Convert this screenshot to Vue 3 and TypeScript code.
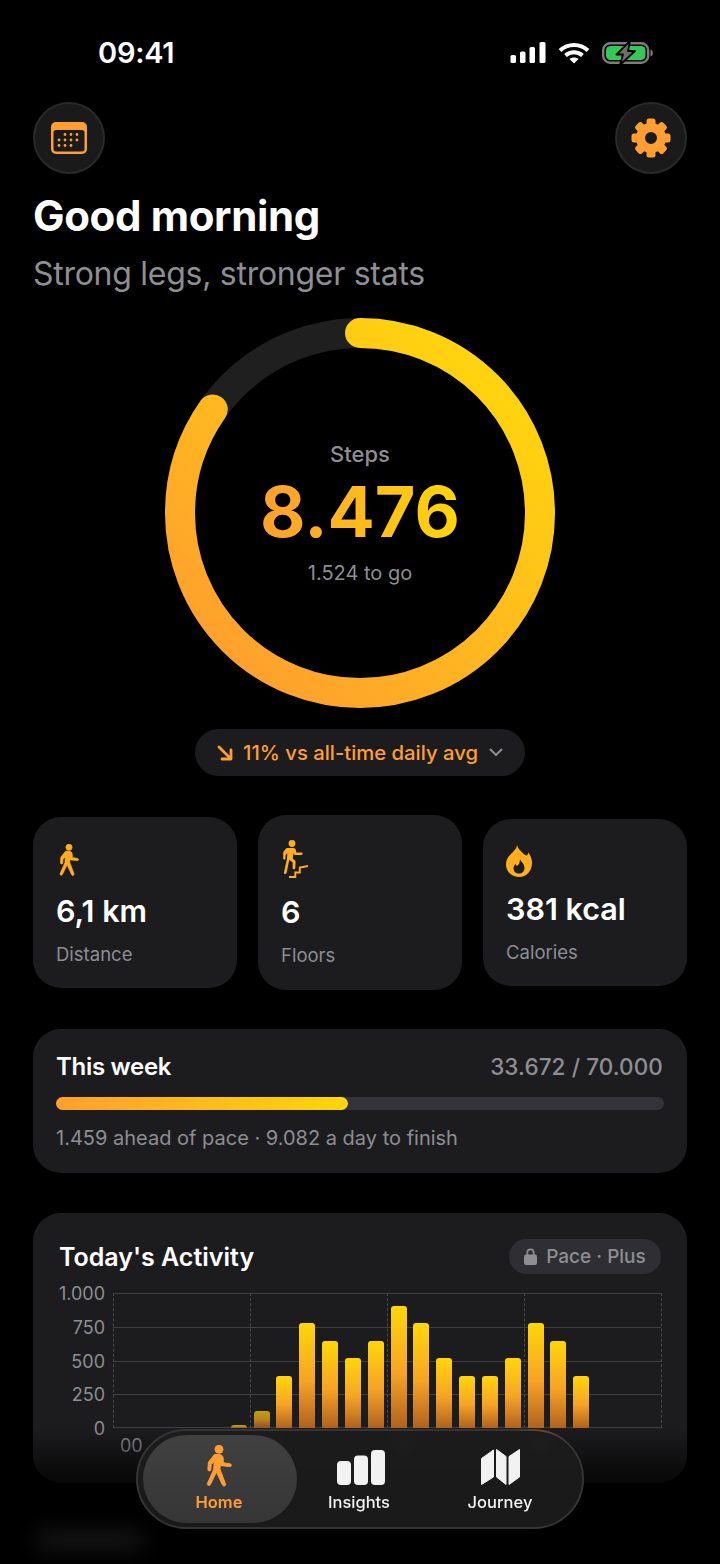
<script setup lang="ts">
// Home tab of the step tracker: ring, stat cards, week bar and hourly chart.
const WALK_TORSO = "M9.5 9.5h4.6c2.4 0 3.9 1.5 4 3.600l.3 4.600 6.800 1.200c1.900.4 1.500 2.900-.4 2.700l-8-.9c-.9-.1-1.300-.6-1.400-1.300l-.5 4.600 5.600 14.900c.7 2-2.100 3-3 1.100l-6.100-13-6 12.600c-1 1.900-3.600.8-3-1.100l6.300-14 .5-7.700-3 2.700-.3 5.100c-.1 2-3 1.900-3-.2l.4-6.400c.1-.8.4-1.400 1-2z";

const TEETH = [0, 45, 90, 135, 180, 225, 270, 315];
const HOUR_BARS: [number, number][] = [
  [5, 25], [6, 125], [7, 385], [8, 775], [9, 645], [10, 515], [11, 645], [12, 905],
  [13, 775], [14, 515], [15, 385], [16, 385], [17, 515], [18, 775], [19, 645], [20, 385],
];
const TICKS = ["1.000", "750", "500", "250", "0"];
const HOURS = ["00", "06", "12", "18"];

const CHART_H = 135;
const barStyle = (hour: number, v: number) => ({
  left: `${(hour / 24) * 100 + 0.65}%`,
  height: `${(v / 1000) * CHART_H}px`,
  opacity: v < 200 ? 0.72 : 1,
});
</script>

<template>
  <div class="phone">
    <header class="status">
      <span class="time">09:41</span>
      <div class="status-icons">
        <svg width="36" height="22" viewBox="0 0 36 22" fill="#fff">
          <rect x="0.5" y="13" width="5.500" height="8" rx="1.600" />
          <rect x="10" y="9.500" width="5.500" height="11.500" rx="1.600" />
          <rect x="19.500" y="5" width="5.500" height="16" rx="1.600" />
          <rect x="29.500" y="0" width="6" height="21" rx="1.600" />
        </svg>
        <svg width="32" height="22" viewBox="0 0 32 22" fill="none" stroke="#fff" stroke-width="4">
          <path d="M2 8.500C9.800 1.200 22.200 1.200 30 8.500" />
          <path d="M7.500 13.500c4.800-4.200 12.200-4.200 17 0" />
          <path d="M16 21.500l-4.500-4.600c2.600-2 6.400-2 9 0z" fill="#fff" stroke="none" />
        </svg>
        <svg width="51" height="24" viewBox="0 0 51 24">
          <rect x="1.200" y="2.200" width="45" height="19.600" rx="7" fill="none" stroke="#7d7d7f" stroke-width="2.400" />
          <rect x="4" y="5" width="39.500" height="14" rx="4.500" fill="#34c759" />
          <path d="M48.500 8.500c1.500.4 2.400 1.700 2.400 3.500s-.9 3.100-2.400 3.500z" fill="#7d7d7f" />
          <path d="M28 0L14.500 13.500h6.500L18 24 33 10h-7z" fill="#6f6f71" stroke="#000" stroke-width="1.800" stroke-linejoin="round" />
        </svg>
      </div>
    </header>

    <div class="top-actions">
      <button class="round-btn">
        <svg width="36" height="32" viewBox="0 0 36 32">
          <rect width="36" height="32" rx="5" fill="#ff9f33" />
          <rect x="2.500" y="8" width="31" height="21.500" rx="2.500" fill="#1b1b1d" />
          <g fill="#ff9f33">
            <circle v-for="c in [[14, 12.500], [20, 12.500], [26, 12.500], [8, 18], [14, 18], [20, 18], [26, 18], [8, 23.500], [14, 23.500], [20, 23.500]]" :key="c.join()" :cx="c[0]" :cy="c[1]" r="1.400" />
          </g>
        </svg>
      </button>
      <button class="round-btn">
        <svg width="40" height="40" viewBox="-20 -20 40 40" fill="#ff9f33">
          <rect v-for="t in TEETH" :key="t" x="-4.500" y="-19.500" width="9" height="9" rx="2.500" :transform="`rotate(${t})`" />
          <circle r="10.500" fill="none" stroke="#ff9f33" stroke-width="9" />
        </svg>
      </button>
    </div>

    <h1 class="greeting">Good morning</h1>
    <p class="tagline">Strong legs, stronger stats</p>

    <section class="ring-wrap">
      <svg class="ring" width="390" height="390" viewBox="0 0 390 390" fill="none">
        <defs>
          <!-- coords are in the rotated space of the progress circle -->
          <linearGradient id="ringGrad" gradientUnits="userSpaceOnUse" x1="40" y1="60" x2="330" y2="320">
            <stop offset="0" stop-color="#ff9f2e" />
            <stop offset="1" stop-color="#ffd30f" />
          </linearGradient>
        </defs>
        <circle cx="195" cy="195" r="180" stroke="#1f1f1f" stroke-width="30" />
        <circle cx="195" cy="195" r="180" stroke="url(#ringGrad)" stroke-width="30" stroke-linecap="round" pathLength="100" stroke-dasharray="84.76 100" transform="rotate(-90 195 195)" />
      </svg>
      <div class="ring-text">
        <span class="ring-label">Steps</span>
        <span class="ring-value">8.476</span>
        <span class="ring-sub">1.524 to go</span>
      </div>
    </section>

    <div class="trend-row">
      <div class="trend">
        <svg width="16" height="16" viewBox="0 0 16 16" fill="none" stroke="#ff9f33" stroke-width="2.800" stroke-linecap="round" stroke-linejoin="round">
          <path d="M2 2l12 12M14 5v9H5" />
        </svg>
        <span>11% vs all-time daily avg</span>
        <svg class="chev" width="14" height="9" viewBox="0 0 14 9" fill="none" stroke="#8e8e93" stroke-width="2" stroke-linecap="round" stroke-linejoin="round">
          <path d="M1.500 1.500L7 7l5.500-5.500" />
        </svg>
      </div>
    </div>

    <div class="stats">
      <div class="stat">
        <svg class="stat-icon walk" width="22" height="33" viewBox="0 0 28 43" fill="#ffae1f" stroke="#ffae1f" stroke-width="1" stroke-linejoin="round">
          <circle cx="14" cy="4.300" r="4" />
          <path :d="WALK_TORSO" />
        </svg>
        <div class="stat-value">6,1 km</div>
        <div class="stat-label">Distance</div>
      </div>
      <div class="stat tall">
        <svg class="stat-icon stairs" width="29" height="38" viewBox="0 0 29 38" fill="#ffae1f">
          <circle cx="11" cy="3.500" r="3.400" />
          <path d="M6 8h6c1.800 0 2.900 1 3 2.500l.2 2h5.300c1.600 0 1.600 2.400 0 2.400H14c-.8 0-1.200-.5-1.300-1l-.3-1.200-.6 6 2.800 2.300-.3 7c-.1 1.800-2.700 1.700-2.700-.1l.1-5.400-3.400-2.700L5.600 33c-.6 1.700-3.100 1-2.600-.8l3-13.600.3-5.300-1.700 1.600-.1 3.600c0 1.500-2.300 1.500-2.300 0v-5.600c0-.5.200-.9.500-1.300L5 8.500z" />
          <path d="M8 37h6.300v-4.500h4.500v-5l8.200-1.500" fill="none" stroke="#ffae1f" stroke-width="1.900" />
        </svg>
        <div class="stat-value">6</div>
        <div class="stat-label">Floors</div>
      </div>
      <div class="stat">
        <svg class="stat-icon" width="26" height="32" viewBox="0 0 26 32">
          <path d="M11 0c1 3.500 3.200 5.500 6 8.300 2 2 3.500 2.800 4.500 1.500.5-.7.600-1.600.5-2.500 2.400 2.700 4 6.500 4 10.700C26 26 20.500 32 13 32S0 26.500 0 19.500C0 13 3.700 10.500 7 7c2-2.200 3.800-4.300 4-7z" fill="#ffae1f" />
          <path d="M14 14c.5 2.500 4.500 4.500 4.500 9 0 3.500-2.500 5.500-5.500 5.500S7.500 26.500 7.500 23.500c0-2 1-3.500 2-4.500.3 1.300 1 2 1.700 1.800 1.300-.5 2.800-3 2.800-6.800z" fill="#1c1c1e" />
        </svg>
        <div class="stat-value">381 kcal</div>
        <div class="stat-label">Calories</div>
      </div>
    </div>

    <section class="card week">
      <div class="week-head">
        <span class="card-title">This week</span>
        <span class="week-total">33.672 / 70.000</span>
      </div>
      <div class="track"><div class="fill" :style="{ width: '48.1%' }"></div></div>
      <div class="week-note">1.459 ahead of pace · 9.082 a day to finish</div>
    </section>

    <section class="card activity">
      <div class="activity-head">
        <span class="card-title">Today's Activity</span>
        <span class="plus-pill">
          <svg width="13" height="17" viewBox="0 0 13 17" fill="#8e8e93">
            <path d="M2.500 7V4.500a4 4 0 0 1 8 0V7h-1.700V4.500a2.300 2.300 0 0 0-4.600 0V7z" />
            <rect y="6.500" width="13" height="10.500" rx="2" />
          </svg>
          Pace · Plus
        </span>
      </div>
      <div class="chart">
        <div class="y-axis">
          <span v-for="t in TICKS" :key="t">{{ t }}</span>
        </div>
        <div class="plot-col">
          <div class="plot">
            <i v-for="n in 4" :key="n" class="hline" :style="{ top: `${(n - 1) * 25}%` }"></i>
            <i class="hline base"></i>
            <i v-for="n in 5" :key="n" class="vline" :style="{ left: `${(n - 1) * 25}%` }"></i>
            <div v-for="[h, v] in HOUR_BARS" :key="h" class="bar" :style="barStyle(h, v)"></div>
          </div>
          <div class="x-axis">
            <span v-for="h in HOURS" :key="h">{{ h }}</span>
          </div>
        </div>
      </div>
    </section>

    <div class="fade"></div>
    <div class="ghost"></div>

    <nav class="tabbar">
      <div class="tab on">
        <svg width="28" height="43" viewBox="0 0 28 43" fill="#ff9f33" stroke="#ff9f33" stroke-width="1" stroke-linejoin="round">
          <circle cx="14" cy="4.300" r="4" />
          <path :d="WALK_TORSO" />
        </svg>
        <span>Home</span>
      </div>
      <div class="tab">
        <svg class="bars-icon" width="48" height="35" viewBox="0 0 48 35" fill="#f2f2f2">
          <rect x="0" y="11" width="14" height="24" rx="4" />
          <rect x="17" y="5.500" width="14" height="29.500" rx="4" />
          <rect x="34" y="0" width="14" height="35" rx="4" />
        </svg>
        <span>Insights</span>
      </div>
      <div class="tab">
        <svg width="39" height="37" viewBox="0 0 39 37" fill="#f2f2f2" stroke="#f2f2f2" stroke-width="1" stroke-linejoin="round">
          <path d="M.5 10.500 12.500 2v27L.5 36.500z" />
          <path d="M15.500 1.500 25 8.500v28L15.500 29z" />
          <path d="M28 8.500 38.500 1.500v27.500L28 36.500z" />
        </svg>
        <span>Journey</span>
      </div>
    </nav>
  </div>
</template>

<style>
html,
body {
  background: #000;
}
</style>

<style scoped>
.phone {
  position: relative;
  width: 720px;
  height: 1564px;
  overflow: hidden;
  background: #000;
  color: #fff;
  font-family: Inter, "Noto Sans", sans-serif;
  padding: 0 33px;
  box-sizing: border-box;
}
.status {
  height: 102px;
  display: flex;
  justify-content: space-between;
  align-items: flex-start;
  padding: 35px 0 0 65px;
  box-sizing: border-box;
}
.time {
  font-size: 29px;
  line-height: 36px;
  font-weight: 600;
  letter-spacing: -0.25px;
}
.status-icons {
  display: flex;
  align-items: center;
  gap: 12px;
  margin: 6px 34px 0 0;
}
.top-actions {
  display: flex;
  justify-content: space-between;
}
.round-btn {
  width: 72px;
  height: 72px;
  padding: 0;
  border-radius: 50%;
  background: #1a1a1a;
  border: 2px solid #2a2a2a;
  display: flex;
  align-items: center;
  justify-content: center;
}
.greeting {
  margin: 15px 0 0;
  font-size: 42px;
  line-height: 54px;
  font-weight: 700;
  letter-spacing: -0.35px;
}
.tagline {
  margin: 11px 0 0;
  font-size: 32px;
  line-height: 40px;
  letter-spacing: -0.27px;
  color: #8e8e93;
}
.ring-wrap {
  margin-top: 24px;
  display: grid;
  justify-items: center;
  align-items: center;
}
.ring,
.ring-text {
  grid-area: 1 / 1;
}
.ring-text {
  display: flex;
  flex-direction: column;
  align-items: center;
}
.ring-label {
  font-size: 22px;
  line-height: 26px;
  font-weight: 500;
  color: #8e8e93;
}
.ring-value {
  margin-top: 4px;
  font-size: 70px;
  line-height: 82px;
  font-weight: 700;
  background: linear-gradient(90deg, #ff9f2e, #ffd60a);
  -webkit-background-clip: text;
  background-clip: text;
  color: transparent;
}
.ring-sub {
  margin-top: 8px;
  font-size: 20px;
  line-height: 24px;
  color: #8e8e93;
}
.trend-row {
  margin-top: 21px;
  display: flex;
  justify-content: center;
}
.trend {
  height: 47px;
  width: 330px;
  border-radius: 24px;
  background: #1c1c1e;
  display: flex;
  align-items: center;
  justify-content: center;
  gap: 10px;
  font-size: 20.25px;
  font-weight: 500;
  color: #ff9f33;
}
.chev {
  margin-left: 1px;
}
.stats {
  margin-top: 39px;
  display: flex;
  align-items: center;
  gap: 21px;
}
.stat {
  width: 204px;
  box-sizing: border-box;
  display: flex;
  flex-direction: column;
  padding: 26px 23px 22px;
  border-radius: 28px;
  background: #1c1c1e;
}
.stat.tall {
  padding-top: 25px;
  padding-bottom: 23px;
}
.stat-icon {
  align-self: flex-start;
}
.stat-icon.walk {
  margin: 1px 0 2px 2px;
}
.stat-icon.stairs {
  margin-bottom: 2px;
}
.stat-value {
  margin-top: 14px;
  font-size: 30.5px;
  line-height: 36px;
  font-weight: 600;
}
.stat-label {
  margin-top: 13px;
  font-size: 18.5px;
  line-height: 24px;
  color: #8e8e93;
}
.card {
  border-radius: 28px;
  background: #1c1c1e;
}
.week {
  margin-top: 39px;
  height: 144px;
  box-sizing: border-box;
  padding: 22px 23px 0;
}
.week-head {
  display: flex;
  justify-content: space-between;
  align-items: center;
  height: 30px;
}
.card-title {
  font-size: 24px;
  font-weight: 600;
  letter-spacing: -0.3px;
}
.week-total {
  margin-right: 1px;
  font-size: 22.5px;
  font-weight: 500;
  letter-spacing: 0.1px;
  color: #8e8e93;
}
.track {
  margin-top: 16px;
  height: 13px;
  border-radius: 7px;
  background: #333338;
}
.fill {
  height: 100%;
  border-radius: 7px;
  background: linear-gradient(90deg, #ff9f2e, #ffd60a);
}
.week-note {
  margin-top: 15px;
  font-size: 20px;
  line-height: 26px;
  color: #8e8e93;
}
.activity {
  margin-top: 40px;
  height: 270px;
  box-sizing: border-box;
  padding: 26px 26px 0 26px;
}
.activity-head {
  display: flex;
  justify-content: space-between;
  align-items: center;
  height: 35px;
}
.activity .card-title {
  font-size: 25px;
  letter-spacing: 0;
}
.plus-pill {
  height: 35px;
  width: 152px;
  border-radius: 18px;
  background: #2f2f33;
  display: flex;
  align-items: center;
  justify-content: center;
  gap: 9px;
  font-size: 19px;
  font-weight: 500;
  color: #8e8e93;
}
.chart {
  margin-top: 19px;
  display: flex;
}
.y-axis {
  width: 46px;
  height: 135px;
  margin-top: 1px;
  display: flex;
  flex-direction: column;
  justify-content: space-between;
  align-items: flex-end;
  font-size: 18px;
  line-height: 0;
  color: #8e8e93;
}
.plot-col {
  margin-left: 8px;
  width: 548px;
}
.plot {
  position: relative;
  height: 135px;
}
.hline {
  position: absolute;
  left: 0;
  right: 0;
  border-top: 1px solid #3f3f42;
}
.hline.base {
  bottom: 0;
}
.vline {
  position: absolute;
  top: 0;
  bottom: 0;
  border-left: 1px dashed #4a4a4d;
}
.bar {
  position: absolute;
  bottom: 0;
  width: 16px;
  border-radius: 3px 3px 0 0;
  background: linear-gradient(180deg, #ffd60a 0%, #f7a326 55%, #b0621e 100%);
}
.x-axis {
  margin-top: 6px;
  display: grid;
  grid-template-columns: repeat(4, 1fr);
  font-size: 18px;
  line-height: 24px;
  color: #8e8e93;
}
.x-axis span {
  padding-left: 7px;
}
.fade {
  position: absolute;
  left: 0;
  right: 0;
  top: 1428px;
  bottom: 0;
  background: linear-gradient(180deg, rgba(0, 0, 0, 0), rgba(0, 0, 0, 0.85) 45%, #000 75%);
}
.ghost {
  position: absolute;
  left: 35px;
  top: 1530px;
  width: 110px;
  height: 20px;
  border-radius: 10px;
  background: #151515;
  filter: blur(10px);
}
.tabbar {
  position: absolute;
  left: 136px;
  top: 1429px;
  width: 448px;
  height: 100px;
  box-sizing: border-box;
  border-radius: 50px;
  border: 2px solid #343434;
  background: rgba(28, 28, 28, 0.93);
  backdrop-filter: blur(5px);
  padding: 4px 5px;
  display: grid;
  grid-template-columns: 154px 124px 1fr;
}
/* bars reflected in the glass edge, top right */
.tabbar::after {
  content: "";
  position: absolute;
  inset: -2px;
  border-radius: inherit;
  border: 2px solid rgba(170, 95, 20, 0.5);
  -webkit-mask-image: radial-gradient(circle at 91% 0, #000, transparent 28px);
  mask-image: radial-gradient(circle at 91% 0, #000, transparent 28px);
}
.tab {
  display: flex;
  flex-direction: column;
  align-items: center;
  justify-content: flex-end;
  padding-bottom: 11px;
  gap: 4px;
  font-size: 16.5px;
  line-height: 20px;
  font-weight: 500;
  color: #f2f2f2;
}
.tab:last-child {
  padding-left: 2px;
}
.tab svg {
  margin-bottom: 3px;
}
.tab .bars-icon {
  margin-left: 4px;
}
.tab.on svg {
  margin-bottom: 0;
}
.tab.on {
  padding-right: 2px;
  border-radius: 44px;
  background: linear-gradient(180deg, #404040, #363636);
  color: #ff9f33;
  font-weight: 600;
}
</style>
